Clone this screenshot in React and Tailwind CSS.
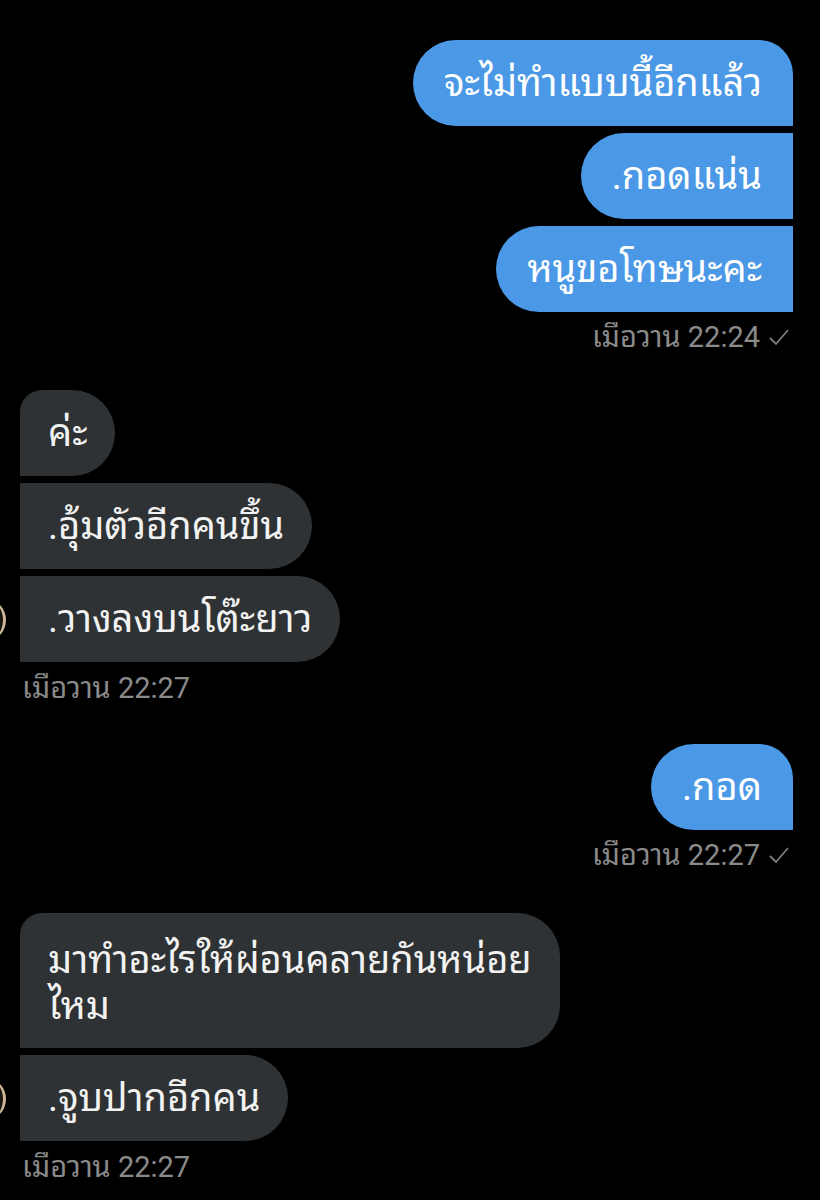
import React from "react";

const font = { fontFamily: 'Roboto, "Noto Sans Thai Looped", "Noto Sans Thai", "Noto Sans", "DejaVu Sans", sans-serif' };

function Check() {
  return (
    <svg width="22" height="18" viewBox="0 0 22 18" className="ml-[8px]">
      <path d="M2 10 L8 16 L20 2" fill="none" stroke="#7d7d7d" strokeWidth="1.8" />
    </svg>
  );
}

function Stamp({ time, mine }) {
  return (
    <div
      className={
        mine
          ? "flex items-center justify-end text-[29px] leading-[32px] text-[#8a8a8a] pr-[3px]"
          : "flex items-center justify-start text-[29px] leading-[32px] text-[#8a8a8a] pl-[2px]"
      }
    >
      <span>เมือวาน {time}</span>
      {mine && <Check />}
    </div>
  );
}

function Outgoing({ messages, time, className }) {
  return (
    <div className={"flex flex-col items-end " + className}>
      <div className="flex flex-col items-end gap-[7px]">
        {messages.map((m, i) => (
          <div
            key={i}
            className={
              i === 0
                ? "bg-[#4a98e6] text-white text-[38px] leading-[46px] py-[20px] px-[31px] rounded-l-[43px] rounded-tr-[34px]"
                : "bg-[#4a98e6] text-white text-[38px] leading-[46px] py-[20px] px-[31px] rounded-l-[43px]"
            }
          >
            {m}
          </div>
        ))}
      </div>
      <div className="mt-[9px]">
        <Stamp time={time} mine />
      </div>
    </div>
  );
}

function Incoming({ messages, time, className }) {
  return (
    <div className={"flex flex-col items-start " + className}>
      <div className="relative flex flex-col items-start gap-[7px]">
        {messages.map((m, i) => (
          <div
            key={i}
            className={
              (i === 0 ? "rounded-tl-[22px] " : "") +
              (m.tall ? "pt-[24px] pb-[19px] " : "py-[20px] ") +
              "bg-[#2f3234] text-[#f2f2f2] text-[38px] leading-[46px] px-[28px] rounded-r-[43px]"
            }
          >
            {m.text}
          </div>
        ))}
        <div className="absolute left-[-58px] bottom-[20px] w-[44px] h-[44px] rounded-full bg-[#1a1612] border-r-[3px] border-[#cdb795]" />
      </div>
      <div className="mt-[10px]">
        <Stamp time={time} />
      </div>
    </div>
  );
}

export default function App() {
  return (
    <div className="w-[820px] h-[1200px] overflow-hidden bg-black pl-[20px] pr-[27px] pt-[40px]" style={font}>
      <Outgoing
        messages={["จะไม่ทำแบบนี้อีกแล้ว", ".กอดแน่น", "หนูขอโทษนะคะ"]}
        time="22:24"
      />
      <Incoming
        className="mt-[37px]"
        messages={[
          { text: "ค่ะ" },
          { text: ".อุ้มตัวอีกคนขึ้น" },
          { text: ".วางลงบนโต๊ะยาว" },
        ]}
        time="22:27"
      />
      <Outgoing className="mt-[40px]" messages={[".กอด"]} time="22:27" />
      <Incoming
        className="mt-[42px]"
        messages={[
          {
            tall: true,
            text: (
              <>
                มาทำอะไรให้ผ่อนคลายกันหน่อย
                <br />
                ไหม
              </>
            ),
          },
          { text: ".จูบปากอีกคน" },
        ]}
        time="22:27"
      />
    </div>
  );
}
